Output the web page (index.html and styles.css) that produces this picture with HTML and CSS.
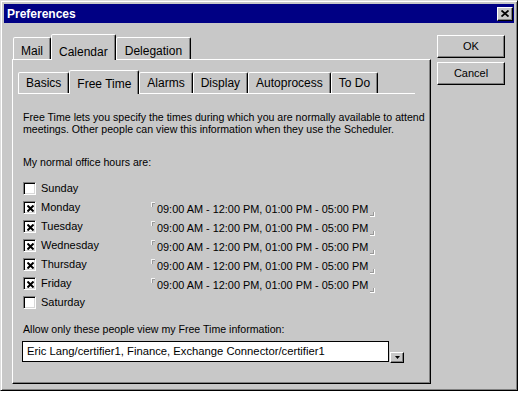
FILE: index.html
```html
<!DOCTYPE html>
<html>
<head>
<meta charset="utf-8">
<title>Preferences</title>
<link rel="stylesheet" href="styles.css">
</head>
<body>
<div class="window">
  <div class="titlebar">
    <span class="title">Preferences</span>
    <span class="close"><svg width="8" height="7" viewBox="0 0 8 7"><path d="M0.5 0.5 L7.5 6.5 M7.5 0.5 L0.5 6.5" stroke="#000" stroke-width="1.8" fill="none"/></svg></span>
  </div>
  <div class="dialog">
    <div class="tabctl">
      <div class="tabrow outer">
        <div class="tab">Mail</div>
        <div class="tab sel">Calendar</div>
        <div class="tab">Delegation</div>
      </div>
      <div class="panel">
        <div class="tabrow inner">
          <div class="tab">Basics</div>
          <div class="tab sel">Free Time</div>
          <div class="tab">Alarms</div>
          <div class="tab">Display</div>
          <div class="tab">Autoprocess</div>
          <div class="tab">To Do</div>
        </div>
        <div class="page">
          <p class="desc">Free Time lets you specify the times during which you are normally available to attend<br>meetings. Other people can view this information when they use the Scheduler.</p>
          <p class="label">My normal office hours are:</p>
          <div class="days">
            <div class="day"><span class="cb"></span><span class="dname">Sunday</span></div>
            <div class="day"><span class="cb"><svg width="7" height="7" viewBox="0 0 7 7"><path d="M0.5 0.5 L6.5 6.5 M6.5 0.5 L0.5 6.5" stroke="#000" stroke-width="2" fill="none"/></svg></span><span class="dname">Monday</span><span class="hours"><span class="ctl"></span><span class="htext">09:00 AM - 12:00 PM, 01:00 PM - 05:00 PM</span><span class="cbr"></span></span></div>
            <div class="day"><span class="cb"><svg width="7" height="7" viewBox="0 0 7 7"><path d="M0.5 0.5 L6.5 6.5 M6.5 0.5 L0.5 6.5" stroke="#000" stroke-width="2" fill="none"/></svg></span><span class="dname">Tuesday</span><span class="hours"><span class="ctl"></span><span class="htext">09:00 AM - 12:00 PM, 01:00 PM - 05:00 PM</span><span class="cbr"></span></span></div>
            <div class="day"><span class="cb"><svg width="7" height="7" viewBox="0 0 7 7"><path d="M0.5 0.5 L6.5 6.5 M6.5 0.5 L0.5 6.5" stroke="#000" stroke-width="2" fill="none"/></svg></span><span class="dname">Wednesday</span><span class="hours"><span class="ctl"></span><span class="htext">09:00 AM - 12:00 PM, 01:00 PM - 05:00 PM</span><span class="cbr"></span></span></div>
            <div class="day"><span class="cb"><svg width="7" height="7" viewBox="0 0 7 7"><path d="M0.5 0.5 L6.5 6.5 M6.5 0.5 L0.5 6.5" stroke="#000" stroke-width="2" fill="none"/></svg></span><span class="dname">Thursday</span><span class="hours"><span class="ctl"></span><span class="htext">09:00 AM - 12:00 PM, 01:00 PM - 05:00 PM</span><span class="cbr"></span></span></div>
            <div class="day"><span class="cb"><svg width="7" height="7" viewBox="0 0 7 7"><path d="M0.5 0.5 L6.5 6.5 M6.5 0.5 L0.5 6.5" stroke="#000" stroke-width="2" fill="none"/></svg></span><span class="dname">Friday</span><span class="hours"><span class="ctl"></span><span class="htext">09:00 AM - 12:00 PM, 01:00 PM - 05:00 PM</span><span class="cbr"></span></span></div>
            <div class="day"><span class="cb"></span><span class="dname">Saturday</span></div>
          </div>
          <p class="label allow">Allow only these people view my Free Time information:</p>
          <div class="fieldrow">
            <div class="field">Eric Lang/certifier1, Finance, Exchange Connector/certifier1</div>
            <span class="dd"><svg width="5" height="3" viewBox="0 0 5 3"><path d="M0 0 H5 L2.5 3 Z" fill="#000"/></svg></span>
          </div>
        </div>
      </div>
    </div>
    <div class="buttons">
      <div class="btn">OK</div>
      <div class="btn">Cancel</div>
    </div>
  </div>
</div>
</body>
</html>
```

FILE: styles.css
```css
* { box-sizing: border-box; }
html, body { margin: 0; padding: 0; background: #fff; }
body {
  font-family: "Liberation Sans", Arial, sans-serif;
  font-size: 11px;
  color: #000;
}
p { margin: 0; }

.window {
  width: 518px;
  height: 391px;
  background: #c8c8c8;
  border: 1px solid;
  border-color: #dcdcdc #000 #000 #dcdcdc;
  box-shadow: inset 1px 1px #fff, inset -1px -1px #808080;
  padding: 3px;
  display: flex;
  flex-direction: column;
}

.titlebar {
  height: 19px;
  flex: none;
  background: #000084;
  color: #fff;
  display: flex;
  align-items: center;
  justify-content: space-between;
  padding: 0 1px 0 3px;
}
.title { font-weight: bold; font-size: 12px; }
.close {
  width: 16px;
  height: 14px;
  background: #c8c8c8;
  border: 1px solid;
  border-color: #fff #000 #000 #fff;
  box-shadow: inset -1px -1px #808080;
  display: flex;
  align-items: center;
  justify-content: center;
}
.close svg { display: block; margin-left: -1px; }

.dialog {
  display: flex;
  padding: 11px 0 0 8px;
  gap: 6px;
}
.tabctl { width: 419px; }

.tabrow { display: flex; align-items: flex-end; }
.tabrow.outer { height: 25px; padding-left: 1px; }
.tabrow.inner { height: 23px; }

.tab {
  border: 1px solid;
  border-bottom: none;
  border-color: #fff #000 transparent #fff;
  border-radius: 2px 2px 0 0;
  box-shadow: inset -1px 0 #808080;
  background: #c8c8c8;
  font-size: 12px;
  line-height: 14px;
  white-space: nowrap;
  padding: 0 7px;
}
.outer .tab { height: 22px; padding-top: 6px; }
.outer .tab:last-child { padding: 6px 8px 0; }
.outer .tab.sel { height: 26px; padding-top: 10px; }
.inner .tab { height: 21px; padding-top: 3px; }
.inner .tab.sel { height: 24px; padding-top: 6px; }
.tab.sel {
  margin-bottom: -1px;
  position: relative;
  z-index: 1;
}

.panel {
  height: 325px;
  border: 1px solid;
  border-color: #fff #000 #000 #fff;
  box-shadow: inset -1px -1px #808080;
  padding: 10px 15px 0 5px;
}

.page {
  border-top: 1px solid #fff;
  padding: 17px 0 0 5px;
}
.desc { line-height: 12px; font-size: 10.6px; white-space: nowrap; }
.label { line-height: 12px; font-size: 10.6px; margin-top: 21px; white-space: nowrap; }
.days { margin-top: 14px; }
.day {
  display: flex;
  height: 19px;
}
.cb {
  width: 13px;
  height: 13px;
  flex: none;
  background: #fff;
  border: 1px solid;
  border-color: #808080 #fff #fff #808080;
  box-shadow: inset 1px 1px #000, inset -1px -1px #d8d8d8;
  display: flex;
  align-items: center;
  justify-content: center;
  margin-right: 5px;
}
.cb svg { display: block; margin: 1px 0 0 1px; }
.dname { width: 110px; line-height: 13px; flex: none; }
.hours { display: flex; height: 16px; }
.ctl {
  width: 4px;
  height: 5px;
  margin-top: 1px;
  border-top: 1px solid #f4f4f4;
  border-left: 1px solid #f4f4f4;
  box-shadow: inset 1px 1px #999;
}
.htext { font-size: 10.9px; line-height: 13px; padding-top: 2px; margin: 0 2px; white-space: nowrap; }
.cbr {
  width: 5px;
  height: 5px;
  align-self: flex-end;
  border-right: 1px solid #fff;
  border-bottom: 1px solid #fff;
  box-shadow: inset -1px -1px #999;
}
.label.allow { margin-top: 8px; }

.fieldrow {
  display: flex;
  align-items: flex-end;
  margin: 6px 0 0 -1px;
}
.field {
  width: 367px;
  height: 21px;
  background: #fff;
  border: 1px solid #000;
  font-size: 11.25px;
  line-height: 19px;
  padding-left: 4px;
  white-space: nowrap;
}
.dd {
  width: 14px;
  height: 11px;
  margin: 0 0 -1px 1px;
  background: #c8c8c8;
  border: 1px solid;
  border-color: #fff #000 #000 #fff;
  box-shadow: inset -1px -1px #808080;
  display: flex;
  align-items: center;
  justify-content: center;
}
.dd svg { display: block; }

.buttons {
  display: flex;
  flex-direction: column;
  gap: 4px;
  margin-top: 1px;
}
.btn {
  width: 68px;
  height: 23px;
  border: 1px solid;
  border-color: #fff #000 #000 #fff;
  box-shadow: inset -1px -1px #808080;
  display: flex;
  align-items: center;
  justify-content: center;
  line-height: 13px;
}
```
